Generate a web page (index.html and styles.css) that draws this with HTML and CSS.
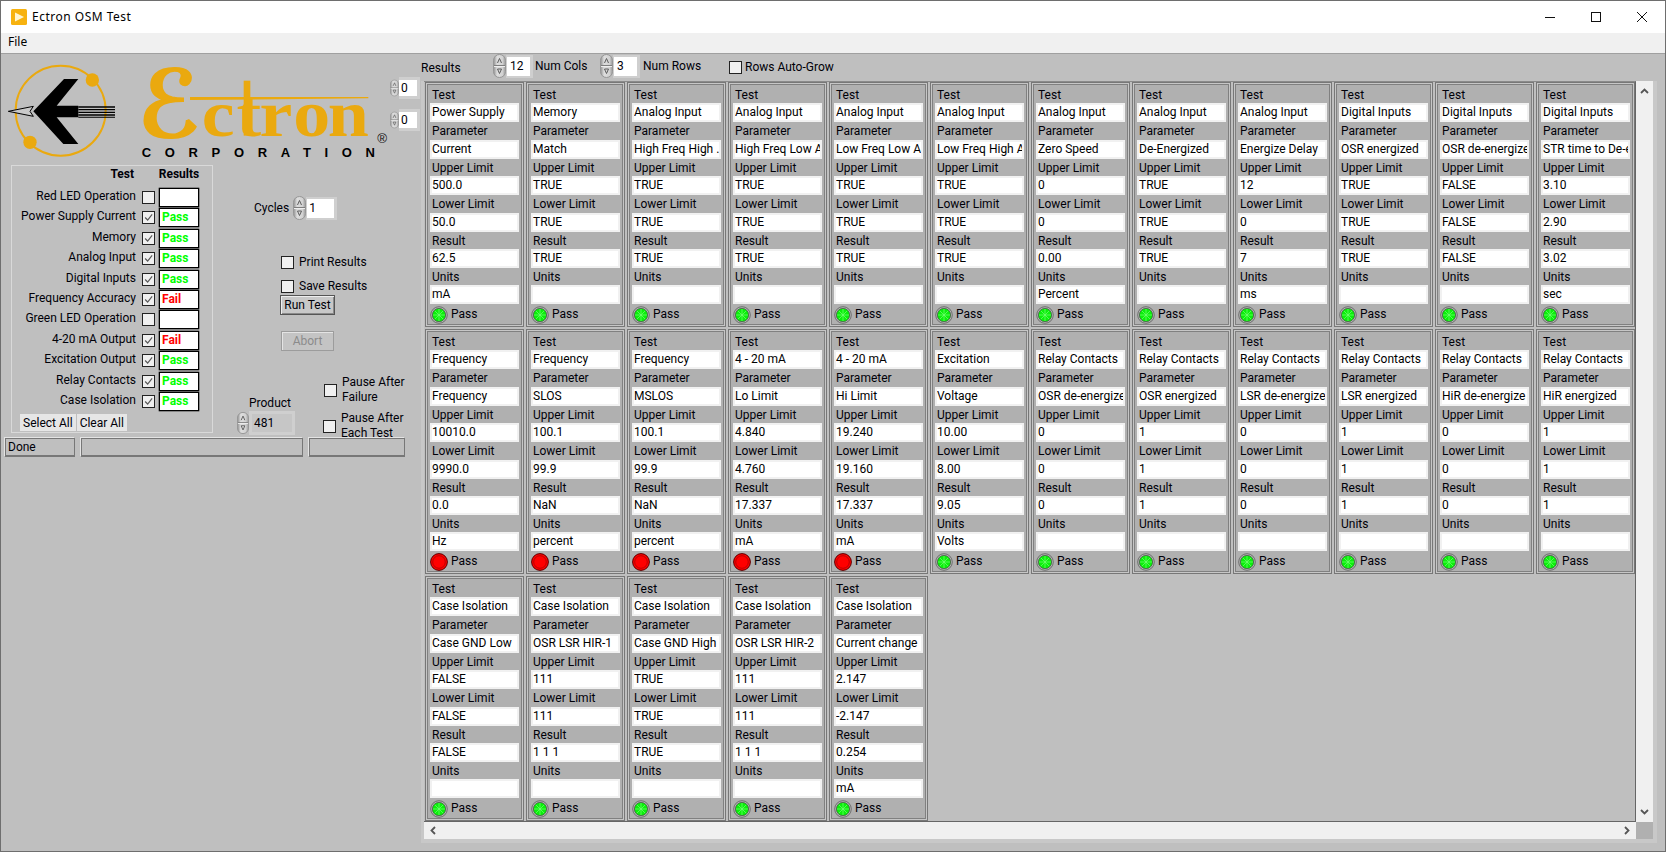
FILE: index.html
```html
<!DOCTYPE html>
<html lang="en">
<head>
<meta charset="utf-8">
<title>Ectron OSM Test</title>
<link rel="stylesheet" href="styles.css">
</head>
<body>
<svg class="defs" width="0" height="0" aria-hidden="true">
  <defs>
    <linearGradient id="spingrad" x1="0" y1="0" x2="1" y2="0">
      <stop offset="0" stop-color="#8f8f8f"/>
      <stop offset=".3" stop-color="#dedede"/>
      <stop offset=".75" stop-color="#d2d2d2"/>
      <stop offset="1" stop-color="#9a9a9a"/>
    </linearGradient>
  </defs>
  <symbol id="spin" viewBox="0 0 13 24">
    <rect x="0.5" y="0.5" width="12" height="23" rx="6" fill="url(#spingrad)" stroke="#969696"/>
    <path d="M1 11.5h11" stroke="#7e7e7e" fill="none"/>
    <path d="M1 12.5h11" stroke="#eeeeee" fill="none"/>
    <path d="M6.5 4.5L4.5 9M6.5 4.5L8.5 9" stroke="#5c5c5c" fill="none"/>
    <path d="M6.5 19.5L4.5 15h4z" stroke="#5c5c5c" fill="none"/>
  </symbol>
  <symbol id="check" viewBox="0 0 13 13">
    <path d="M2.5 6.5L5.5 9.5L10.8 2.8" stroke="#5a5a5a" stroke-width="1.4" fill="none"/>
  </symbol>
  <symbol id="led-on" viewBox="0 0 18 18">
    <circle cx="9" cy="9" r="8.3" fill="#b4b4b4" stroke="#6e6e6e"/>
    <circle cx="9" cy="9" r="6.6" fill="#0bf00b" stroke="#3f4f3f" stroke-width=".7"/>
    <path d="M9 3v12M3 9h12M4.8 4.8l8.4 8.4M13.2 4.8l-8.4 8.4" stroke="#74ff74" stroke-width=".7" fill="none"/>
  </symbol>
  <symbol id="led-off" viewBox="0 0 18 18">
    <circle cx="9" cy="9" r="8.4" fill="#ff0000" stroke="#5c0000"/>
    <circle cx="9" cy="9" r="6.3" fill="#ff0000" stroke="#a80000" stroke-width=".8"/>
  </symbol>
</svg>
<div class="app">
  <header class="titlebar">
    <svg class="appicon" viewBox="0 0 16 16" aria-hidden="true"><rect width="16" height="16" rx="1.5" fill="#f7b20f"/><path d="M4 3.5L13 8L4 12.5z" fill="#fff5d0"/></svg>
    <span class="apptitle">Ectron OSM Test</span>
    <div class="winbtns">
      <svg class="winbtn" viewBox="0 0 46 32" aria-hidden="true"><path d="M18 16.5h10" stroke="#111" fill="none"/></svg>
      <svg class="winbtn" viewBox="0 0 46 32" aria-hidden="true"><rect x="18.5" y="11.5" width="9" height="9" stroke="#111" fill="none"/></svg>
      <svg class="winbtn" viewBox="0 0 46 32" aria-hidden="true"><path d="M18 11l10 10M28 11l-10 10" stroke="#111" fill="none"/></svg>
    </div>
  </header>
  <nav class="menubar"><span class="menuitem">File</span></nav>
  <main class="main">
    <section class="left">
      <div class="logorow">
        <svg class="logo" viewBox="0 0 1170 333" aria-label="Ectron Corporation">
          <g transform="translate(0 -165)">
            <circle cx="182" cy="335" r="135" fill="none" stroke="#eaa90f" stroke-width="6"/>
            <circle cx="277" cy="243" r="20" fill="#eaa90f"/>
            <circle cx="90" cy="430" r="20" fill="#eaa90f"/>
            <path d="M25 337L100 322L90 337L100 352z" fill="#c9c9c9" stroke="#000" stroke-width="3"/>
            <path d="M100 337L192 240H235L170 320H235V355H170L235 435H190z" fill="#000"/>
            <path d="M235 322h110v4h-110zM235 330h110v4h-110zM235 338h110v4h-110zM235 346h110v4h-110zM235 353h110v3h-110z" fill="#000"/>
            <text class="wm-e" x="414" y="414" textLength="190" lengthAdjust="spacingAndGlyphs">ℰ</text>
            <text class="wm" transform="translate(605 412) scale(1.12 1)" x="0 93 155 245 338">ctron</text>
            <path d="M731 245h20v165h-20z" fill="#eaa90f"/>
            <path d="M570 294L1105 294V298L570 303z" fill="#eaa90f"/>
            <text class="wm-r" x="1132" y="433">®</text>
            <text class="wm-c" x="425" y="473" textLength="700">CORPORATION</text>
          </g>
        </svg>
        <div class="logospins">
          <div class="num num-small"><svg class="spin"><use href="#spin"/></svg><div class="numframe"><span class="numval">0</span></div></div>
          <div class="num num-small"><svg class="spin"><use href="#spin"/></svg><div class="numframe"><span class="numval">0</span></div></div>
        </div>
      </div>
      <div class="midrow">
        <div class="testbox">
          <div class="testgrid">
            <div class="th lbl">Test</div><div></div><div class="th res-h">Results</div>
            <div class="lbl">Red LED Operation</div><div class="cb"></div><div class="resbox"></div>
            <div class="lbl">Power Supply Current</div><div class="cb on"><svg><use href="#check"/></svg></div><div class="resbox pass">Pass</div>
            <div class="lbl">Memory</div><div class="cb on"><svg><use href="#check"/></svg></div><div class="resbox pass">Pass</div>
            <div class="lbl">Analog Input</div><div class="cb on"><svg><use href="#check"/></svg></div><div class="resbox pass">Pass</div>
            <div class="lbl">Digital Inputs</div><div class="cb on"><svg><use href="#check"/></svg></div><div class="resbox pass">Pass</div>
            <div class="lbl">Frequency Accuracy</div><div class="cb on"><svg><use href="#check"/></svg></div><div class="resbox fail">Fail</div>
            <div class="lbl">Green LED Operation</div><div class="cb"></div><div class="resbox"></div>
            <div class="lbl">4-20 mA Output</div><div class="cb on"><svg><use href="#check"/></svg></div><div class="resbox fail">Fail</div>
            <div class="lbl">Excitation Output</div><div class="cb on"><svg><use href="#check"/></svg></div><div class="resbox pass">Pass</div>
            <div class="lbl">Relay Contacts</div><div class="cb on"><svg><use href="#check"/></svg></div><div class="resbox pass">Pass</div>
            <div class="lbl">Case Isolation</div><div class="cb on"><svg><use href="#check"/></svg></div><div class="resbox pass">Pass</div>
          </div>
          <div class="selbtns"><span class="selbtn">Select All</span><span class="selbtn">Clear All</span></div>
        </div>
        <div class="controls">
          <div class="cycles"><span>Cycles</span><div class="num num-cyc"><svg class="spin"><use href="#spin"/></svg><div class="numframe"><span class="numval">1</span></div></div></div>
          <label class="opt opt-print"><span class="cb"></span>Print Results</label>
          <label class="opt opt-save"><span class="cb"></span>Save Results</label>
          <div class="btn run">Run Test</div>
          <div class="btn abort">Abort</div>
          <div class="bottomctl">
            <div class="product">
              <div class="prodlabel">Product</div>
              <div class="num num-prod"><svg class="spin"><use href="#spin"/></svg><div class="numframe"><span class="numval">481</span></div></div>
            </div>
            <div class="pauses">
              <div class="pause"><span class="cb"></span><span>Pause After<br>Failure</span></div>
              <div class="pause pause2"><span class="cb"></span><span>Pause After<br>Each Test</span></div>
            </div>
          </div>
        </div>
      </div>
      <div class="status"><div class="seg seg1">Done</div><div class="seg seg2"></div><div class="seg seg3"></div></div>
    </section>
    <section class="right">
      <div class="topbar">
        <span class="tb-results">Results</span>
        <div class="num num-top"><svg class="spin"><use href="#spin"/></svg><div class="numframe"><span class="numval">12</span></div></div>
        <span class="tb-label tb-cols">Num Cols</span>
        <div class="num num-top"><svg class="spin"><use href="#spin"/></svg><div class="numframe"><span class="numval">3</span></div></div>
        <span class="tb-label tb-rows">Num Rows</span>
        <span class="cb tb-cb"></span><span class="tb-grow">Rows Auto-Grow</span>
      </div>
      <div class="arrayframe">
        <div class="grid">
          <div class="card"><div class="l">Test</div><div class="f">Power Supply</div><div class="l">Parameter</div><div class="f">Current</div><div class="l">Upper Limit</div><div class="f">500.0</div><div class="l">Lower Limit</div><div class="f">50.0</div><div class="l">Result</div><div class="f">62.5</div><div class="l">Units</div><div class="f">mA</div><div class="st"><svg class="led"><use href="#led-on"/></svg>Pass</div></div>
          <div class="card"><div class="l">Test</div><div class="f">Memory</div><div class="l">Parameter</div><div class="f">Match</div><div class="l">Upper Limit</div><div class="f">TRUE</div><div class="l">Lower Limit</div><div class="f">TRUE</div><div class="l">Result</div><div class="f">TRUE</div><div class="l">Units</div><div class="f"></div><div class="st"><svg class="led"><use href="#led-on"/></svg>Pass</div></div>
          <div class="card"><div class="l">Test</div><div class="f">Analog Input</div><div class="l">Parameter</div><div class="f">High Freq High .</div><div class="l">Upper Limit</div><div class="f">TRUE</div><div class="l">Lower Limit</div><div class="f">TRUE</div><div class="l">Result</div><div class="f">TRUE</div><div class="l">Units</div><div class="f"></div><div class="st"><svg class="led"><use href="#led-on"/></svg>Pass</div></div>
          <div class="card"><div class="l">Test</div><div class="f">Analog Input</div><div class="l">Parameter</div><div class="f">High Freq Low A</div><div class="l">Upper Limit</div><div class="f">TRUE</div><div class="l">Lower Limit</div><div class="f">TRUE</div><div class="l">Result</div><div class="f">TRUE</div><div class="l">Units</div><div class="f"></div><div class="st"><svg class="led"><use href="#led-on"/></svg>Pass</div></div>
          <div class="card"><div class="l">Test</div><div class="f">Analog Input</div><div class="l">Parameter</div><div class="f">Low Freq Low A</div><div class="l">Upper Limit</div><div class="f">TRUE</div><div class="l">Lower Limit</div><div class="f">TRUE</div><div class="l">Result</div><div class="f">TRUE</div><div class="l">Units</div><div class="f"></div><div class="st"><svg class="led"><use href="#led-on"/></svg>Pass</div></div>
          <div class="card"><div class="l">Test</div><div class="f">Analog Input</div><div class="l">Parameter</div><div class="f">Low Freq High A</div><div class="l">Upper Limit</div><div class="f">TRUE</div><div class="l">Lower Limit</div><div class="f">TRUE</div><div class="l">Result</div><div class="f">TRUE</div><div class="l">Units</div><div class="f"></div><div class="st"><svg class="led"><use href="#led-on"/></svg>Pass</div></div>
          <div class="card"><div class="l">Test</div><div class="f">Analog Input</div><div class="l">Parameter</div><div class="f">Zero Speed</div><div class="l">Upper Limit</div><div class="f">0</div><div class="l">Lower Limit</div><div class="f">0</div><div class="l">Result</div><div class="f">0.00</div><div class="l">Units</div><div class="f">Percent</div><div class="st"><svg class="led"><use href="#led-on"/></svg>Pass</div></div>
          <div class="card"><div class="l">Test</div><div class="f">Analog Input</div><div class="l">Parameter</div><div class="f">De-Energized</div><div class="l">Upper Limit</div><div class="f">TRUE</div><div class="l">Lower Limit</div><div class="f">TRUE</div><div class="l">Result</div><div class="f">TRUE</div><div class="l">Units</div><div class="f"></div><div class="st"><svg class="led"><use href="#led-on"/></svg>Pass</div></div>
          <div class="card"><div class="l">Test</div><div class="f">Analog Input</div><div class="l">Parameter</div><div class="f">Energize Delay</div><div class="l">Upper Limit</div><div class="f">12</div><div class="l">Lower Limit</div><div class="f">0</div><div class="l">Result</div><div class="f">7</div><div class="l">Units</div><div class="f">ms</div><div class="st"><svg class="led"><use href="#led-on"/></svg>Pass</div></div>
          <div class="card"><div class="l">Test</div><div class="f">Digital Inputs</div><div class="l">Parameter</div><div class="f">OSR energized</div><div class="l">Upper Limit</div><div class="f">TRUE</div><div class="l">Lower Limit</div><div class="f">TRUE</div><div class="l">Result</div><div class="f">TRUE</div><div class="l">Units</div><div class="f"></div><div class="st"><svg class="led"><use href="#led-on"/></svg>Pass</div></div>
          <div class="card"><div class="l">Test</div><div class="f">Digital Inputs</div><div class="l">Parameter</div><div class="f">OSR de-energize</div><div class="l">Upper Limit</div><div class="f">FALSE</div><div class="l">Lower Limit</div><div class="f">FALSE</div><div class="l">Result</div><div class="f">FALSE</div><div class="l">Units</div><div class="f"></div><div class="st"><svg class="led"><use href="#led-on"/></svg>Pass</div></div>
          <div class="card"><div class="l">Test</div><div class="f">Digital Inputs</div><div class="l">Parameter</div><div class="f">STR time to De-e</div><div class="l">Upper Limit</div><div class="f">3.10</div><div class="l">Lower Limit</div><div class="f">2.90</div><div class="l">Result</div><div class="f">3.02</div><div class="l">Units</div><div class="f">sec</div><div class="st"><svg class="led"><use href="#led-on"/></svg>Pass</div></div>

          <div class="card"><div class="l">Test</div><div class="f">Frequency</div><div class="l">Parameter</div><div class="f">Frequency</div><div class="l">Upper Limit</div><div class="f">10010.0</div><div class="l">Lower Limit</div><div class="f">9990.0</div><div class="l">Result</div><div class="f">0.0</div><div class="l">Units</div><div class="f">Hz</div><div class="st"><svg class="led"><use href="#led-off"/></svg>Pass</div></div>
          <div class="card"><div class="l">Test</div><div class="f">Frequency</div><div class="l">Parameter</div><div class="f">SLOS</div><div class="l">Upper Limit</div><div class="f">100.1</div><div class="l">Lower Limit</div><div class="f">99.9</div><div class="l">Result</div><div class="f">NaN</div><div class="l">Units</div><div class="f">percent</div><div class="st"><svg class="led"><use href="#led-off"/></svg>Pass</div></div>
          <div class="card"><div class="l">Test</div><div class="f">Frequency</div><div class="l">Parameter</div><div class="f">MSLOS</div><div class="l">Upper Limit</div><div class="f">100.1</div><div class="l">Lower Limit</div><div class="f">99.9</div><div class="l">Result</div><div class="f">NaN</div><div class="l">Units</div><div class="f">percent</div><div class="st"><svg class="led"><use href="#led-off"/></svg>Pass</div></div>
          <div class="card"><div class="l">Test</div><div class="f">4 - 20 mA</div><div class="l">Parameter</div><div class="f">Lo Limit</div><div class="l">Upper Limit</div><div class="f">4.840</div><div class="l">Lower Limit</div><div class="f">4.760</div><div class="l">Result</div><div class="f">17.337</div><div class="l">Units</div><div class="f">mA</div><div class="st"><svg class="led"><use href="#led-off"/></svg>Pass</div></div>
          <div class="card"><div class="l">Test</div><div class="f">4 - 20 mA</div><div class="l">Parameter</div><div class="f">Hi Limit</div><div class="l">Upper Limit</div><div class="f">19.240</div><div class="l">Lower Limit</div><div class="f">19.160</div><div class="l">Result</div><div class="f">17.337</div><div class="l">Units</div><div class="f">mA</div><div class="st"><svg class="led"><use href="#led-off"/></svg>Pass</div></div>
          <div class="card"><div class="l">Test</div><div class="f">Excitation</div><div class="l">Parameter</div><div class="f">Voltage</div><div class="l">Upper Limit</div><div class="f">10.00</div><div class="l">Lower Limit</div><div class="f">8.00</div><div class="l">Result</div><div class="f">9.05</div><div class="l">Units</div><div class="f">Volts</div><div class="st"><svg class="led"><use href="#led-on"/></svg>Pass</div></div>
          <div class="card"><div class="l">Test</div><div class="f">Relay Contacts</div><div class="l">Parameter</div><div class="f">OSR de-energize</div><div class="l">Upper Limit</div><div class="f">0</div><div class="l">Lower Limit</div><div class="f">0</div><div class="l">Result</div><div class="f">0</div><div class="l">Units</div><div class="f"></div><div class="st"><svg class="led"><use href="#led-on"/></svg>Pass</div></div>
          <div class="card"><div class="l">Test</div><div class="f">Relay Contacts</div><div class="l">Parameter</div><div class="f">OSR energized</div><div class="l">Upper Limit</div><div class="f">1</div><div class="l">Lower Limit</div><div class="f">1</div><div class="l">Result</div><div class="f">1</div><div class="l">Units</div><div class="f"></div><div class="st"><svg class="led"><use href="#led-on"/></svg>Pass</div></div>
          <div class="card"><div class="l">Test</div><div class="f">Relay Contacts</div><div class="l">Parameter</div><div class="f">LSR de-energize</div><div class="l">Upper Limit</div><div class="f">0</div><div class="l">Lower Limit</div><div class="f">0</div><div class="l">Result</div><div class="f">0</div><div class="l">Units</div><div class="f"></div><div class="st"><svg class="led"><use href="#led-on"/></svg>Pass</div></div>
          <div class="card"><div class="l">Test</div><div class="f">Relay Contacts</div><div class="l">Parameter</div><div class="f">LSR energized</div><div class="l">Upper Limit</div><div class="f">1</div><div class="l">Lower Limit</div><div class="f">1</div><div class="l">Result</div><div class="f">1</div><div class="l">Units</div><div class="f"></div><div class="st"><svg class="led"><use href="#led-on"/></svg>Pass</div></div>
          <div class="card"><div class="l">Test</div><div class="f">Relay Contacts</div><div class="l">Parameter</div><div class="f">HiR de-energize</div><div class="l">Upper Limit</div><div class="f">0</div><div class="l">Lower Limit</div><div class="f">0</div><div class="l">Result</div><div class="f">0</div><div class="l">Units</div><div class="f"></div><div class="st"><svg class="led"><use href="#led-on"/></svg>Pass</div></div>
          <div class="card"><div class="l">Test</div><div class="f">Relay Contacts</div><div class="l">Parameter</div><div class="f">HiR energized</div><div class="l">Upper Limit</div><div class="f">1</div><div class="l">Lower Limit</div><div class="f">1</div><div class="l">Result</div><div class="f">1</div><div class="l">Units</div><div class="f"></div><div class="st"><svg class="led"><use href="#led-on"/></svg>Pass</div></div>

          <div class="card"><div class="l">Test</div><div class="f">Case Isolation</div><div class="l">Parameter</div><div class="f">Case GND Low</div><div class="l">Upper Limit</div><div class="f">FALSE</div><div class="l">Lower Limit</div><div class="f">FALSE</div><div class="l">Result</div><div class="f">FALSE</div><div class="l">Units</div><div class="f"></div><div class="st"><svg class="led"><use href="#led-on"/></svg>Pass</div></div>
          <div class="card"><div class="l">Test</div><div class="f">Case Isolation</div><div class="l">Parameter</div><div class="f">OSR LSR HIR-1</div><div class="l">Upper Limit</div><div class="f">111</div><div class="l">Lower Limit</div><div class="f">111</div><div class="l">Result</div><div class="f">1 1 1</div><div class="l">Units</div><div class="f"></div><div class="st"><svg class="led"><use href="#led-on"/></svg>Pass</div></div>
          <div class="card"><div class="l">Test</div><div class="f">Case Isolation</div><div class="l">Parameter</div><div class="f">Case GND High</div><div class="l">Upper Limit</div><div class="f">TRUE</div><div class="l">Lower Limit</div><div class="f">TRUE</div><div class="l">Result</div><div class="f">TRUE</div><div class="l">Units</div><div class="f"></div><div class="st"><svg class="led"><use href="#led-on"/></svg>Pass</div></div>
          <div class="card"><div class="l">Test</div><div class="f">Case Isolation</div><div class="l">Parameter</div><div class="f">OSR LSR HIR-2</div><div class="l">Upper Limit</div><div class="f">111</div><div class="l">Lower Limit</div><div class="f">111</div><div class="l">Result</div><div class="f">1 1 1</div><div class="l">Units</div><div class="f"></div><div class="st"><svg class="led"><use href="#led-on"/></svg>Pass</div></div>
          <div class="card"><div class="l">Test</div><div class="f">Case Isolation</div><div class="l">Parameter</div><div class="f">Current change</div><div class="l">Upper Limit</div><div class="f">2.147</div><div class="l">Lower Limit</div><div class="f">-2.147</div><div class="l">Result</div><div class="f">0.254</div><div class="l">Units</div><div class="f">mA</div><div class="st"><svg class="led"><use href="#led-on"/></svg>Pass</div></div>
        </div>
        <div class="vscroll">
          <svg class="chev" viewBox="0 0 9 6" aria-hidden="true"><path d="M1 5L4.5 1.5L8 5" stroke="#555" stroke-width="1.8" fill="none"/></svg>
          <svg class="chev" viewBox="0 0 9 6" aria-hidden="true"><path d="M1 1L4.5 4.5L8 1" stroke="#555" stroke-width="1.8" fill="none"/></svg>
        </div>
        <div class="hscroll">
          <svg class="chevh" viewBox="0 0 6 9" aria-hidden="true"><path d="M5 1L1.5 4.5L5 8" stroke="#555" stroke-width="1.8" fill="none"/></svg>
          <svg class="chevh" viewBox="0 0 6 9" aria-hidden="true"><path d="M1 1L4.5 4.5L1 8" stroke="#555" stroke-width="1.8" fill="none"/></svg>
        </div>
        <div class="corner"></div>
      </div>
    </section>
  </main>
</div>
</body>
</html>
```
FILE: styles.css
```css
* { box-sizing: border-box; }
html, body { margin: 0; padding: 0; height: 100%; overflow: hidden; }
body { font: 12px/15px Roboto, sans-serif; color: #000008; background: #bfbfbf; }
.defs { display: block; width: 0; height: 0; overflow: hidden; }
.app { width: 1666px; height: 852px; display: flex; flex-direction: column; border: 1px solid #6e6e6e; }

.titlebar { height: 32px; flex: none; background: #fff; display: flex; align-items: center; padding-left: 10px; }
.appicon { width: 16px; height: 16px; margin-top: -1px; }
.apptitle { font: 12px "Noto Sans", sans-serif; letter-spacing: .5px; margin-left: 5px; margin-top: -1px; color: #000; }
.winbtns { margin-left: auto; display: flex; }
.winbtn { width: 46px; height: 32px; display: block; }
.menubar { height: 21px; flex: none; background: #f0f0f0; border-bottom: 1px solid #a0a0a0; padding: 0 7px 3px; display: flex; align-items: center; }
.menuitem { font: 12px "Noto Sans", sans-serif; color: #000; }

.main { flex: 1; display: flex; min-height: 0; }
.left { width: 419px; flex: none; display: flex; flex-direction: column; }
.logorow { height: 111px; flex: none; display: flex; }
.logo { width: 390px; height: 111px; display: block; flex: none; margin-left: -1px; }
.logo text { font-family: "Liberation Serif", serif; fill: #eaa90f; }
.logo .wm { font-size: 198px; font-weight: 700; }
.logo .wm-e { font-family: "DejaVu Serif", "DejaVu Sans", serif; font-size: 280px; font-weight: 700; stroke: #eaa90f; stroke-width: 5px; }
.logo .wm-r { font-family: "Liberation Sans", sans-serif; font-size: 40px; fill: #111; }
.logo .wm-c { font-family: "Liberation Sans", sans-serif; font-size: 39px; font-weight: 700; fill: #000; }
.logospins { width: 30px; flex: none; padding-top: 21px; display: flex; flex-direction: column; gap: 6px; }

.num { display: flex; align-items: center; }
.spin { width: 13px; height: 24px; flex: none; }
.numframe { background: #cfcfcf; padding: 2px 3px; display: flex; }
.numval { background: #fff; display: block; padding-left: 2px; height: 19px; line-height: 19px; }
.num-small .spin { width: 9px; height: 26px; }
.num-small .numframe { width: 21px; padding: 3px 3px 3px 0; }
.num-small .numval { width: 18px; height: 16px; line-height: 16px; }
.num-cyc .numframe { width: 31px; padding: 2px 3px 2px 1px; }
.num-cyc .numval { width: 27px; }
.num-top { align-self: flex-start; }
.num-top .numframe { width: 27px; padding: 2px 3px 2px 1px; }
.num-top .numval { width: 23px; padding-left: 3px; }
.num-prod .spin { width: 12px; }
.num-prod .numframe { width: 46px; height: 24px; padding: 3px; background: #cfcfcf; }
.num-prod .numval { background: #c6c6c6; width: 40px; height: 18px; line-height: 18px; }

.midrow { height: 268px; flex: none; display: flex; }
.testbox { width: 202px; margin-left: 10px; flex: none; border: 1px solid #d9d9d9; display: flex; flex-direction: column; }
.testgrid { display: grid; column-gap: 0; grid-template-columns: 130px 17px 40px; grid-template-rows: 22px repeat(11, 20.4px); align-items: start; }
.testgrid > div:nth-child(3n+1) { justify-self: end; }
.lbl { height: 15px; margin-top: 1px; white-space: nowrap; padding-right: 6px; }
.th { font-weight: 700; margin-top: 0; padding-top: 1px; height: 17px; }
.th.lbl { padding-right: 8px; }
.res-h { white-space: nowrap; justify-self: center; }
.cb { display: block; width: 13px; height: 13px; flex: none; border: 1px solid #222; background: #f0f0f0; margin-top: 3px; }
.cb svg { display: block; width: 11px; height: 11px; }
.resbox { width: 40px; height: 19px; background: #fff; border: 1px solid #000; box-shadow: 0 0 0 .3px #000; font-weight: 700; line-height: 17px; padding-left: 2px; overflow: hidden; }
.pass { color: #00ff00; }
.fail { color: #ff0000; }
.selbtns { margin-left: 8px; margin-top: 2px; display: flex; gap: 1px; }
.selbtn { background: #e6e6e6; height: 17px; line-height: 18px; padding: 0 3px; white-space: nowrap; }

.controls { flex: none; width: 205px; display: flex; flex-direction: column; align-items: flex-start; }
.cycles { margin-top: 31px; margin-left: 41px; display: flex; align-items: center; gap: 4px; }
.opt { display: flex; align-items: center; gap: 5px; margin-left: 68px; white-space: nowrap; }
.opt .cb { margin: 0; }
.opt-print { margin-top: 35px; }
.opt-save { margin-top: 9px; }
.btn { width: 55px; height: 20px; line-height: 18px; text-align: center; white-space: nowrap; }
.run { margin-top: 1px; margin-left: 67px; background: #c8c8c8; border: 1px solid #555; box-shadow: inset 1px 1px 0 #eee, inset -1px -1px 0 #8a8a8a; }
.abort { margin-top: 16px; margin-left: 68px; width: 53px; background: #c4c4c4; border: 1px solid #9c9c9c; color: #8b8b8b; box-shadow: inset 1px 1px 0 #e4e4e4; }
.bottomctl { display: flex; margin-top: 24px; margin-left: 24px; }
.product { width: 87px; flex: none; padding-top: 21px; }
.prodlabel { margin-left: 12px; }
.pauses { display: flex; flex-direction: column; gap: 6px; }
.pause { display: flex; align-items: center; gap: 5px; white-space: nowrap; }
.pause .cb { margin: 0; }
.pause2 { margin-left: -1px; }

.status { margin: 5px 15px 0 4px; height: 19px; flex: none; display: flex; gap: 6px; }
.seg { border: 1px solid #777; border-bottom-width: 2px; height: 19px; line-height: 16px; padding-left: 2px; box-shadow: -1px -1px 0 #e4e4e4; }
.seg1 { width: 70px; }
.seg2 { width: 222px; }
.seg3 { width: 96px; }

.right { flex: 1; display: flex; flex-direction: column; min-width: 0; }
.topbar { height: 27px; flex: none; display: flex; align-items: center; padding-left: 1px; }
.tb-results { width: 72px; margin-top: 2px; }
.tb-label { margin-left: 2px; margin-top: -2px; white-space: nowrap; }
.tb-cols { width: 65px; }
.tb-rows { width: 86px; margin-left: 3px; }
.tb-cb { margin: 0 3px 0 0; }
.tb-grow { white-space: nowrap; }
.arrayframe { margin-left: 1px; width: 1236px; height: 762px; flex: none; background: #c8c8c8; padding: 0 4px 4px 3px; display: grid; grid-template-columns: 1212px 17px; grid-template-rows: 741px 17px; }
.grid { background: #bfbfbf; border-right: 1px solid #666; border-bottom: 1px solid #666; border-top: 1px solid #8a8a8a; padding: 0 0 0 1px; display: grid; grid-template-columns: repeat(12, 99px); grid-auto-rows: 245px; gap: 2px; overflow: hidden; }
.card { background: #b0b0b0; border: 1px solid #777; box-shadow: inset 0 0 0 1px #c6c6c6, inset 0 0 0 2px #808080; padding: 3px 4px 0; display: flex; flex-direction: column; }
.l { height: 17.4px; line-height: 18px; padding-left: 2px; flex: none; white-space: nowrap; }
.f { height: 19px; line-height: 15px; flex: none; background: #fff; border: 2px solid #f1f1f1; white-space: nowrap; overflow: hidden; color: #000; }
.st { display: flex; align-items: center; height: 21px; flex: none; }
.led { width: 18px; height: 18px; margin-right: 3px; flex: none; }
.vscroll { background: #f0f0f0; display: flex; flex-direction: column; justify-content: space-between; align-items: center; padding: 7px 0; }
.chev { width: 9px; height: 6px; display: block; }
.hscroll { background: #f0f0f0; display: flex; justify-content: space-between; align-items: center; padding: 0 6px; }
.chevh { width: 6px; height: 9px; display: block; }
.corner { background: #b0b0b0; }
```
